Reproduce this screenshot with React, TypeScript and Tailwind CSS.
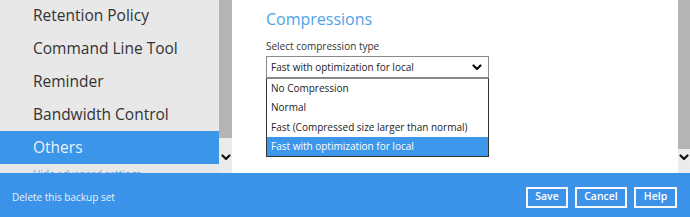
import React from "react";

const Chevron = ({ className = "" }: { className?: string }) => (
  <svg width="10" height="7" viewBox="0 0 10 7" className={className}>
    <polyline points="1.5,1.5 5,5 8.5,1.5" fill="none" stroke="#111" strokeWidth="2.2" strokeLinecap="round" strokeLinejoin="round" />
  </svg>
);

export default function App() {
  const items = ["Retention Policy", "Command Line Tool", "Reminder", "Bandwidth Control"];
  const options = ["No Compression", "Normal", "Fast (Compressed size larger than normal)"];
  return (
    <div className="w-[690px] h-[217px] overflow-hidden flex flex-col bg-white" style={{ fontFamily: '"Open Sans", "Noto Sans", sans-serif' }}>
      <div className="h-[173px] flex flex-row">
        <div className="w-[219px] bg-[#e8e8e8] overflow-hidden flex flex-col">
          <div className="-mt-[1px] flex flex-col">
            {items.map((t) => (
              <div key={t} className="h-[33px] flex items-center pl-[33px] text-[15.5px] text-[#333333]">
                {t}
              </div>
            ))}
            <div className="h-[33px] flex items-center pl-[33px] text-[15.5px] text-[#eaf3fd] bg-[#3b95e9]">Others</div>
            <div className="pl-[33px] pt-[3px] text-[10px] text-[#5aa6ea] leading-[14px]">Hide advanced settings</div>
          </div>
        </div>
        <div className="w-[13px] bg-[#ebebeb] flex flex-col">
          <div className="h-[138px] bg-[#b4b4b4]"></div>
          <div className="flex justify-center pt-[16px]">
            <Chevron />
          </div>
        </div>
        <div className="flex-1 pl-[34px] pt-[7px] flex flex-col">
          <div className="text-[16px] leading-[24px] text-[#4ea2e8]">Compressions</div>
          <div className="text-[10px] leading-[14px] text-[#333] mt-[8px]">Select compression type</div>
          <div className="w-[223px] mt-[3px] flex flex-col">
            <div className="h-[22px] border border-[#8a8a8a] flex items-center justify-between pl-[4px] pr-[6px] text-[10px] text-[#222]">
              <span>Fast with optimization for local</span>
              <Chevron />
            </div>
            <div className="border border-[#333] border-t-[#888] flex flex-col text-[10px] text-[#222]">
              {options.map((o) => (
                <div key={o} className="h-[19.3px] flex items-center pl-[4px]">{o}</div>
              ))}
              <div className="h-[19px] flex items-center pl-[4px] bg-[#3c97ea] text-white">Fast with optimization for local</div>
            </div>
          </div>
        </div>
        <div className="w-[12px] bg-[#ececec] flex flex-col">
          <div className="h-[149px] bg-[#b4b4b4]"></div>
          <div className="flex justify-center pt-[5px]">
            <Chevron />
          </div>
        </div>
      </div>
      <div className="h-[44px] bg-[#3a93e8] flex items-center justify-between pl-[12px] pr-[13px] pt-[4px]">
        <span className="text-[10px] text-[#e8f2fd]">Delete this backup set</span>
        <div className="flex gap-[7px]">
          <button className="h-[21px] w-[42px] border-2 border-[#f4f8fd] text-white text-[10.5px] font-semibold flex items-center justify-center">Save</button>
          <button className="h-[21px] w-[52px] border-2 border-[#f4f8fd] text-white text-[10.5px] font-semibold flex items-center justify-center">Cancel</button>
          <button className="h-[21px] w-[43px] border-2 border-[#f4f8fd] text-white text-[10.5px] font-semibold flex items-center justify-center">Help</button>
        </div>
      </div>
    </div>
  );
}
